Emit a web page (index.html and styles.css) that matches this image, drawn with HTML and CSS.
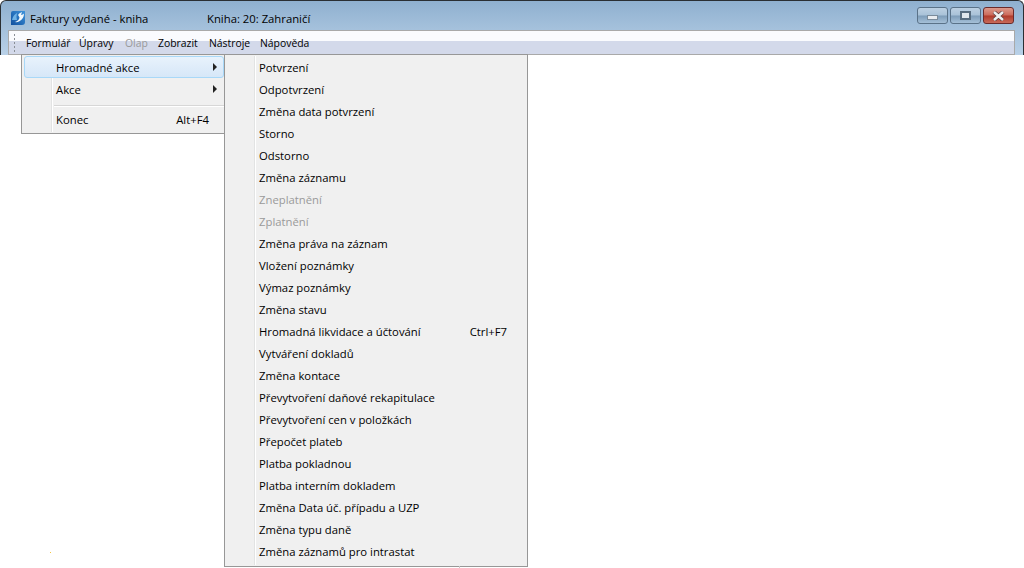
FILE: index.html
```html
<!DOCTYPE html>
<html lang="cs">
<head>
<meta charset="utf-8">
<title>Faktury vydané - kniha</title>
<link rel="stylesheet" href="styles.css">
</head>
<body>
<div class="window">
  <header class="titlebar">
    <svg class="app-icon" width="16" height="16" viewBox="0 0 16 16"><defs><linearGradient id="g" x1="0" y1="1" x2="1" y2="0"><stop offset="0" stop-color="#0f4f9e"/><stop offset="1" stop-color="#3f94dc"/></linearGradient></defs><path d="M3 1 H15 V12 Q15 15 12 15 H1 V3 Q1 1 3 1 Z" fill="url(#g)"/><path d="M2 10 Q3 5 7 3 Q6 7 7 10 Z" fill="#6fb2e6"/><path d="M8 5 Q9 3 12 2 L11 5 Q13 4.5 14 3.5 Q14 9 9 11.5 Q7 12.5 5 12 Q9 10.5 9.5 7.5 Q9 6 8 5 Z" fill="#f2f8fc"/></svg>
    <span class="title-main">Faktury vydané - kniha</span>
    <span class="title-book">Kniha: 20: Zahraničí</span>
    <div class="controls">
      <span class="ctl"><span class="glyph-min"></span></span>
      <span class="ctl"><span class="glyph-max"></span></span>
      <span class="ctl ctl-close"><svg width="15" height="10" viewBox="0 0 15 10"><path d="M3 1 L12 9 M12 1 L3 9" stroke="#5a3a3a" stroke-width="4"/><path d="M3 1 L12 9 M12 1 L3 9" stroke="#efefef" stroke-width="2.6"/></svg></span>
    </div>
  </header>
  <nav class="menubar">
    <span class="grip"></span>
    <div class="menu-items">
      <span class="mi">Formulář</span>
      <span class="mi">Úpravy</span>
      <span class="mi mi-off">Olap</span>
      <span class="mi">Zobrazit</span>
      <span class="mi">Nástroje</span>
      <span class="mi">Nápověda</span>
    </div>
  </nav>
</div>
<div class="menu menu-main">
  <div class="row row-active"><span class="lbl">Hromadné akce</span><span class="arrow"></span></div>
  <div class="row"><span class="lbl">Akce</span><span class="arrow"></span></div>
  <div class="sep"></div>
  <div class="row"><span class="lbl">Konec</span><span class="key">Alt+F4</span></div>
</div>
<div class="menu menu-sub">
  <div class="row"><span class="lbl">Potvrzení</span></div>
  <div class="row"><span class="lbl">Odpotvrzení</span></div>
  <div class="row"><span class="lbl">Změna data potvrzení</span></div>
  <div class="row"><span class="lbl">Storno</span></div>
  <div class="row"><span class="lbl">Odstorno</span></div>
  <div class="row"><span class="lbl">Změna záznamu</span></div>
  <div class="row row-off"><span class="lbl">Zneplatnění</span></div>
  <div class="row row-off"><span class="lbl">Zplatnění</span></div>
  <div class="row"><span class="lbl">Změna práva na záznam</span></div>
  <div class="row"><span class="lbl">Vložení poznámky</span></div>
  <div class="row"><span class="lbl">Výmaz poznámky</span></div>
  <div class="row"><span class="lbl">Změna stavu</span></div>
  <div class="row"><span class="lbl">Hromadná likvidace a účtování</span><span class="key">Ctrl+F7</span></div>
  <div class="row"><span class="lbl">Vytváření dokladů</span></div>
  <div class="row"><span class="lbl">Změna kontace</span></div>
  <div class="row"><span class="lbl">Převytvoření daňové rekapitulace</span></div>
  <div class="row"><span class="lbl">Převytvoření cen v položkách</span></div>
  <div class="row"><span class="lbl">Přepočet plateb</span></div>
  <div class="row"><span class="lbl">Platba pokladnou</span></div>
  <div class="row"><span class="lbl">Platba interním dokladem</span></div>
  <div class="row"><span class="lbl">Změna Data úč. případu a UZP</span></div>
  <div class="row"><span class="lbl">Změna typu daně</span></div>
  <div class="row"><span class="lbl">Změna záznamů pro intrastat</span></div>
</div>
<span class="speck"></span>
<span class="tick"></span>
</body>
</html>
```
FILE: styles.css
```css
* { box-sizing: border-box; }
html, body { margin: 0; height: 100%; background: #fff; overflow: hidden; }
body { font-family: "Open Sans", "Noto Sans", sans-serif; font-size: 11.3px; color: #000; }
.window {
  height: 55px;
  background: linear-gradient(#8fb0cf, #b9d1e8);
  border-top: 1px solid #2a2f33;
  border-right: 1px solid #2a2f33;
  border-left: 1px solid #2a2f33;
  border-radius: 6px 6px 0 0;
  padding: 0 8px 0 7px;
}
.titlebar { height: 29px; display: flex; align-items: center; padding-top: 5px; padding-left: 2px; }
.app-icon { margin-right: 4px; flex: none; margin-top: -1px; }
.title-main { width: 177px; }
.controls { margin-left: auto; margin-right: 1px; display: flex; gap: 2px; margin-top: -5px; }
.ctl {
  width: 31px; height: 17px; display: flex; align-items: center; justify-content: center;
  border: 1px solid #5a7288; border-radius: 3px;
  background: linear-gradient(#bcd0e2 0, #a9c2d8 48%, #7d9cb8 52%, #a5c0d8 100%);
}
.ctl-close { border-color: #6a2a2a; background: linear-gradient(#dc9a8c 0, #cc6a5a 48%, #b03a2a 52%, #c86a5a 100%); }
.glyph-min { width: 11px; height: 5px; margin-top: 4px; background: #e8ecf0; border: 1px solid #7a8b9a; }
.glyph-max { width: 11px; height: 9px; background: #dfe6ec; border: 2px solid #566b7e; }
.menubar {
  height: 25px; display: flex; align-items: center; padding-left: 4px;
  border: 1px solid #a9a9a9; border-bottom-width: 1px;
  background: linear-gradient(#fafbfe 0, #fafbfe 42%, #d3d9ea 44%, #d3d9ea 100%);
}
.grip { width: 3px; height: 20px; margin-right: 10px; background-image: radial-gradient(circle, #8a8f96 1px, transparent 1.1px); background-size: 3px 4px; }
.menu-items { display: grid; grid-template-columns: 53px 46px 33px 51px 51px auto; font-size: 10.4px; padding-top: 1px; }
.mi { line-height: 20px; white-space: nowrap; }
.mi-off { color: #9a9a9a; }
.menu {
  position: absolute; background: #f0f0f0; border: 1px solid #979797; padding: 1px 2px;
}
.menu::before {
  content: ""; position: absolute; top: 1px; bottom: 1px; left: 29px; width: 1px; background: #e2e3e3; box-shadow: 1px 0 0 #fff;
}
.menu-main { left: 21px; top: 54px; width: 204px; height: 80px; padding-right: 0; }
.menu-sub { left: 224px; top: 54px; width: 304px; height: 513px; }
.row { height: 22px; display: flex; align-items: center; padding-left: 32px; padding-right: 18px; position: relative; z-index: 1; white-space: nowrap; }
.menu-main .row { padding-right: 15px; }
.menu-main .row-active {
  border: 1px solid #a8d8f8; border-radius: 3px; padding-left: 31px; padding-right: 14px;
  background: linear-gradient(#e8f2fc, #d6e7f8);
}
.row-off { color: #9a9a9a; }
.lbl { flex: 1; }
.arrow { width: 0; height: 0; border-left: 4px solid #222; border-top: 4px solid transparent; border-bottom: 4px solid transparent; margin-right: -8px; }
.sep { height: 8px; margin-left: 28px; position: relative; }
.sep::after { content: ""; position: absolute; left: 2px; right: 0; top: 5px; height: 1px; background: #d7d7d7; box-shadow: 0 1px 0 #fff; }
.speck { position: absolute; left: 50px; top: 552px; width: 1px; height: 1px; background: #f5c542; }
.tick { position: absolute; left: 459px; top: 566px; width: 1px; height: 2px; background: #c8c8c8; }
```
